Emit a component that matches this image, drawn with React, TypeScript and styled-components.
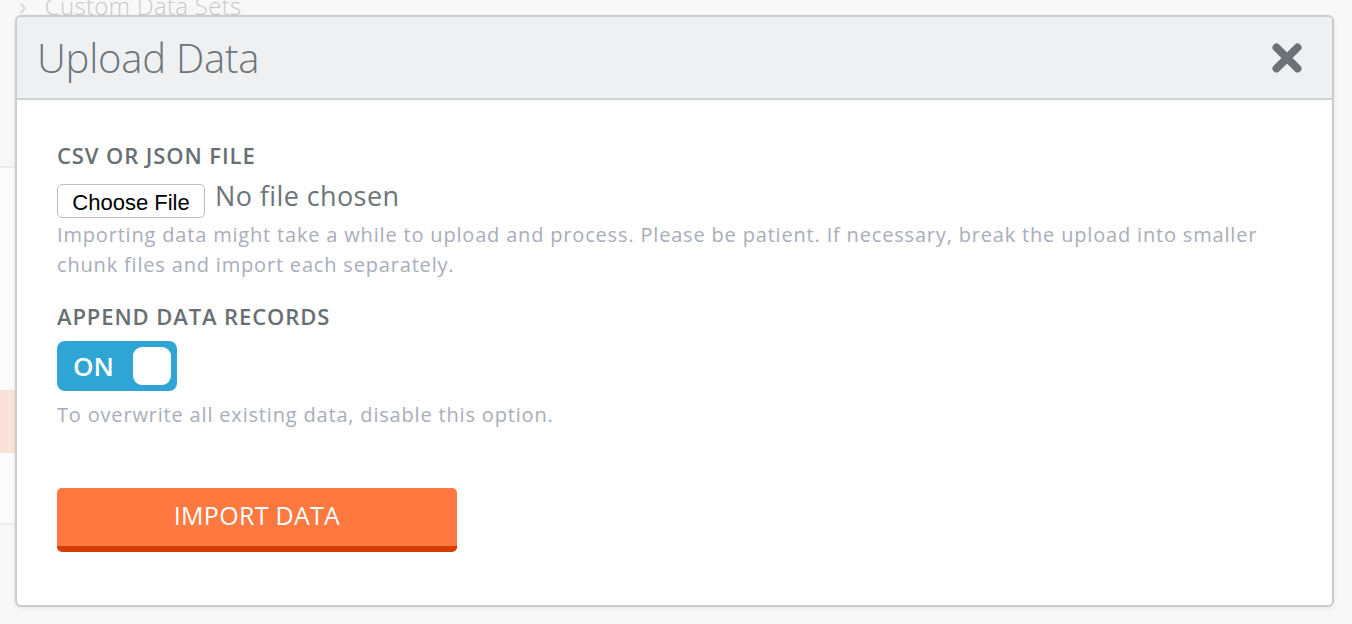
import React, { useState } from 'react';
import styled, { createGlobalStyle } from 'styled-components';

const PAGE_BG = '#f8f8f8';
const TITLE_GREY = '#6d7579';
const LABEL_GREY = '#676f73';
const HELP_GREY = '#a9adba';
const TOGGLE_BLUE = '#2fa5d5';
const ORANGE = '#ff7840';
const ORANGE_DARK = '#d63d00';

const GlobalStyle = createGlobalStyle`
  html, body {
    margin: 0;
    padding: 0;
    height: 100%;
    background: ${PAGE_BG};
    font-family: 'Open Sans', 'Noto Sans', sans-serif;
    overflow: hidden;
  }
  * {
    box-sizing: border-box;
  }
`;

export default function App() {
  let [append, setAppend] = useState(true);
  let [fileName, setFileName] = useState('');

  return (
    <>
      <GlobalStyle />
      <Page>
        <BackgroundList>
          <SectionRow>
            <Chevron>›</Chevron>
            <SectionTitle>Custom Data Sets</SectionTitle>
          </SectionRow>
          <BackgroundRow height={222} />
          <BackgroundRow height={63} highlighted />
          <BackgroundRow height={72} bordered />
        </BackgroundList>

        <Modal>
          <ModalHeader>
            <ModalTitle>Upload Data</ModalTitle>
            <CloseButton aria-label="Close">
              <svg width="30" height="30" viewBox="0 0 30 30">
                <path
                  d="M4.5 4.5 L25.5 25.5 M25.5 4.5 L4.5 25.5"
                  stroke="#6b7175"
                  strokeWidth="8"
                  strokeLinecap="round"
                />
              </svg>
            </CloseButton>
          </ModalHeader>

          <ModalBody>
            <FieldLabel>CSV or JSON File</FieldLabel>
            <FileRow>
              <FileButton as="label">
                Choose File
                <HiddenInput
                  type="file"
                  onChange={(e) => setFileName(e.target.files?.[0]?.name || '')}
                />
              </FileButton>
              <FileName>{fileName || 'No file chosen'}</FileName>
            </FileRow>
            <HelpText>
              Importing data might take a while to upload and process. Please be patient. If
              necessary, break the upload into smaller chunk files and import each separately.
            </HelpText>

            <FieldLabel spaced>Append Data Records</FieldLabel>
            <Toggle on={append} onClick={() => setAppend(!append)}>
              <ToggleText>{append ? 'ON' : 'OFF'}</ToggleText>
              <ToggleKnob />
            </Toggle>
            <HelpText spaced>To overwrite all existing data, disable this option.</HelpText>

            <ImportButton>Import Data</ImportButton>
          </ModalBody>
        </Modal>
      </Page>
    </>
  );
}

const Page = styled.div`
  position: relative;
  width: 100%;
  height: 624px;
  overflow: hidden;
  background: ${PAGE_BG};
`;

const BackgroundList = styled.div`
  display: flex;
  flex-direction: column;
  width: 900px;
  margin-top: -15px;
`;

const SectionRow = styled.div`
  display: flex;
  align-items: flex-start;
  gap: 18px;
  height: 183px;
  padding: 5px 0 0 19px;
  background: ${PAGE_BG};
  border-bottom: 2px solid #ececec;
`;

const Chevron = styled.span`
  font-size: 26px;
  line-height: 30px;
  color: #d6d6d6;
`;

const SectionTitle = styled.span`
  font-size: 24px;
  font-weight: 300;
  line-height: 32px;
  letter-spacing: 0.3px;
  color: #c9c9c9;
`;

type BackgroundRowProps = {
  height: number;
  highlighted?: boolean;
  bordered?: boolean;
};

const BackgroundRow = styled.div<BackgroundRowProps>`
  height: ${(props) => props.height}px;
  background: ${(props) => (props.highlighted ? '#fbe2d9' : '#fbfbfb')};
  border-bottom: ${(props) => (props.bordered ? '2px solid #ececec' : 'none')};
`;

const Modal = styled.div`
  position: absolute;
  left: 15px;
  top: 15px;
  width: 1319px;
  height: 592px;
  display: flex;
  flex-direction: column;
  background: #ffffff;
  border: 2px solid #cbcbcb;
  border-radius: 6px;
  box-shadow: 0 1px 4px rgba(0, 0, 0, 0.08);
  overflow: hidden;
`;

const ModalHeader = styled.div`
  display: flex;
  align-items: center;
  justify-content: space-between;
  height: 83px;
  padding: 0 30px 0 20px;
  background: #eff0f2;
  border-bottom: 2px solid #d0d1d3;
`;

const ModalTitle = styled.h1`
  margin: 0;
  font-size: 40px;
  font-weight: 300;
  color: ${TITLE_GREY};
  letter-spacing: -0.2px;
`;

const CloseButton = styled.button`
  display: flex;
  padding: 0;
  border: none;
  background: none;
  cursor: pointer;
`;

const ModalBody = styled.div`
  display: flex;
  flex-direction: column;
  align-items: flex-start;
  padding: 40px 40px;
`;

const FieldLabel = styled.div<{ spaced?: boolean }>`
  margin-top: ${(props) => (props.spaced ? '21px' : '0')};
  font-size: 22px;
  font-weight: 600;
  line-height: 30px;
  letter-spacing: 0.9px;
  text-transform: uppercase;
  color: ${LABEL_GREY};
`;

const FileRow = styled.div`
  display: flex;
  align-items: center;
  gap: 10px;
  margin-top: 14px;
`;

const FileButton = styled.button`
  position: relative;
  display: flex;
  align-items: center;
  justify-content: center;
  width: 148px;
  height: 34px;
  padding: 4px 0 0;
  border: 1px solid #bdbdbd;
  border-radius: 5px;
  background: #ffffff;
  font-family: 'Liberation Sans', Arial, sans-serif;
  font-size: 22px;
  color: #000000;
  cursor: pointer;
`;

const HiddenInput = styled.input`
  display: none;
`;

const FileName = styled.span`
  font-size: 27px;
  line-height: 30px;
  letter-spacing: 0.4px;
  margin-top: -10px;
  color: ${TITLE_GREY};
`;

const HelpText = styled.p<{ spaced?: boolean }>`
  margin: ${(props) => (props.spaced ? '9px' : '2px')} 0 0;
  font-size: 20px;
  line-height: 30px;
  letter-spacing: 0.82px;
  color: ${HELP_GREY};
`;

const Toggle = styled.button<{ on: boolean }>`
  display: flex;
  align-items: center;
  justify-content: space-between;
  width: 120px;
  height: 50px;
  margin-top: 10px;
  padding: 0 6px 0 16px;
  border: none;
  border-radius: 8px;
  background: ${(props) => (props.on ? TOGGLE_BLUE : '#c6cad2')};
  cursor: pointer;
`;

const ToggleText = styled.span`
  font-family: 'Open Sans', sans-serif;
  font-size: 26px;
  font-weight: 600;
  color: #ffffff;
`;

const ToggleKnob = styled.span`
  width: 38px;
  height: 38px;
  border-radius: 9px;
  background: #ffffff;
`;

const ImportButton = styled.button`
  width: 400px;
  height: 64px;
  margin-top: 58px;
  padding: 0 0 4px;
  border: none;
  border-bottom: 6px solid ${ORANGE_DARK};
  border-radius: 5px;
  background: ${ORANGE};
  font-family: 'Open Sans', sans-serif;
  font-size: 25px;
  font-weight: 500;
  letter-spacing: 0.3px;
  text-transform: uppercase;
  color: #ffffff;
  cursor: pointer;
`;
